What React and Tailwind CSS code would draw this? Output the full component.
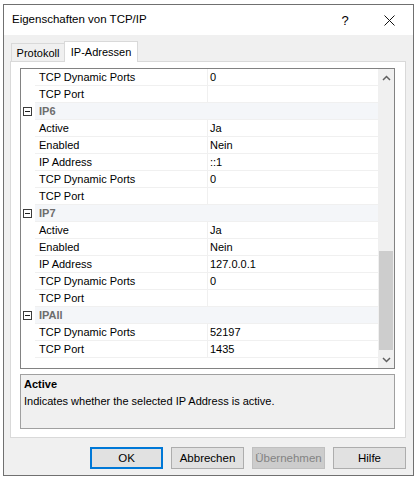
import React from 'react';

const ROWS = [
  { name: 'TCP Dynamic Ports', value: '0' },
  { name: 'TCP Port', value: '' },
  { cat: 'IP6' },
  { name: 'Active', value: 'Ja' },
  { name: 'Enabled', value: 'Nein' },
  { name: 'IP Address', value: '::1' },
  { name: 'TCP Dynamic Ports', value: '0' },
  { name: 'TCP Port', value: '' },
  { cat: 'IP7' },
  { name: 'Active', value: 'Ja' },
  { name: 'Enabled', value: 'Nein' },
  { name: 'IP Address', value: '127.0.0.1' },
  { name: 'TCP Dynamic Ports', value: '0' },
  { name: 'TCP Port', value: '' },
  { cat: 'IPAll' },
  { name: 'TCP Dynamic Ports', value: '52197' },
  { name: 'TCP Port', value: '1435' },
];

function MinusBox() {
  return (
    <div className="w-[9px] h-[9px] border border-[#3c3c3c] bg-white flex items-center justify-center">
      <div className="w-[5px] h-px bg-[#1e1e1e]" />
    </div>
  );
}

function Row({ row }) {
  if (row.cat) {
    return (
      <div className="flex h-[17px]">
        <div className="w-[14px] shrink-0 bg-white flex items-center justify-start pl-[2px]">
          <MinusBox />
        </div>
        <div className="flex-1 bg-[#f4f6f9] border-b border-[#f0f0f0] flex items-center pl-[4px] pt-px font-bold text-[#6d6d6d]">
          {row.cat}
        </div>
      </div>
    );
  }
  return (
    <div className="flex h-[17px]">
      <div className="w-[14px] shrink-0 bg-white" />
      <div className="w-[173px] shrink-0 border-b border-r border-[#f0f0f0] flex items-center pl-[4px] pt-px text-black">
        {row.name}
      </div>
      <div className="flex-1 border-b border-[#f0f0f0] flex items-center pl-[2px] pt-px text-black">
        {row.value}
      </div>
    </div>
  );
}

function Button({ children, primary, disabled }) {
  const cls = primary
    ? 'border-2 border-[#0078d7] bg-[#e1e1e1] text-black'
    : disabled
    ? 'border border-[#bfbfbf] bg-[#cccccc] text-[#838383]'
    : 'border border-[#adadad] bg-[#e1e1e1] text-black';
  return (
    <div className={`w-[73px] h-[22px] flex items-center justify-center pt-px text-[11.5px] ${cls}`}>
      {children}
    </div>
  );
}

export default function App() {
  return (
    <div
      className="w-[418px] h-[479px] bg-white pt-[4px] pl-[3px] text-[11px] leading-none"
      style={{ fontFamily: '"Liberation Sans", Arial, sans-serif' }}
    >
      <div className="w-[411px] h-[472px] border border-[#707070] flex flex-col bg-[#f0f0f0]">
        {/* title bar */}
        <div className="h-[30px] bg-white flex items-center shrink-0">
          <div className="pl-[8px] text-[11.5px] text-black flex-1">Eigenschaften von TCP/IP</div>
          <div className="w-[46px] flex justify-center pl-[2px] text-[13px] text-black">?</div>
          <div className="w-[46px] flex justify-center pr-[2px]">
            <svg width="11" height="11" viewBox="0 0 11 11">
              <path d="M0.5 0.5 L10.5 10.5 M10.5 0.5 L0.5 10.5" stroke="#111" strokeWidth="1" />
            </svg>
          </div>
        </div>

        {/* body */}
        <div className="flex-1 flex flex-col pl-[6px] pr-[7px] pt-[6px]">
          {/* tabs */}
          <div className="flex items-end h-[20px] pl-[1px]">
            <div className="h-[18px] w-[53px] border border-b-0 border-r-0 border-[#d9d9d9] bg-[#f0f0f0] flex items-center justify-center pt-px text-black">
              Protokoll
            </div>
            <div className="h-[21px] w-[74px] border border-b-0 border-[#d9d9d9] bg-white flex items-center justify-center text-black -mb-px relative z-10">
              IP-Adressen
            </div>
          </div>

          {/* panel */}
          <div className="h-[377px] border border-[#d9d9d9] bg-white pl-[9px] pr-[10px] pt-[6px]">
            {/* property grid */}
            <div className="h-[301px] border border-[#828282] bg-white flex">
              <div className="flex-1 flex flex-col">
                {ROWS.map((r, i) => (
                  <Row key={i} row={r} />
                ))}
              </div>
              <div className="w-[16px] bg-[#f0f0f0] flex flex-col items-center">
                <div className="h-[17px] w-full flex items-center justify-center">
                  <svg width="9" height="6" viewBox="0 0 9 6">
                    <path d="M1 5 L4.5 1.5 L8 5" stroke="#606060" strokeWidth="1.5" fill="none" />
                  </svg>
                </div>
                <div className="flex-1 w-full flex flex-col pb-[1px]">
                  <div className="flex-1" />
                  <div className="h-[99px] mx-px bg-[#cdcdcd]" />
                </div>
                <div className="h-[17px] w-full flex items-center justify-center">
                  <svg width="9" height="6" viewBox="0 0 9 6">
                    <path d="M1 1 L4.5 4.5 L8 1" stroke="#606060" strokeWidth="1.5" fill="none" />
                  </svg>
                </div>
              </div>
            </div>

            {/* description */}
            <div className="mt-[5px] h-[55px] border border-[#a0a0a0] bg-[#f0f0f0] pl-[3px] pt-[4px]">
              <div className="font-bold text-black">Active</div>
              <div className="mt-[6px] text-black">Indicates whether the selected IP Address is active.</div>
            </div>
          </div>

          {/* buttons */}
          <div className="flex justify-end gap-[8px] pt-[9px]">
            <Button primary>OK</Button>
            <Button>Abbrechen</Button>
            <Button disabled>Übernehmen</Button>
            <Button>Hilfe</Button>
          </div>
        </div>
      </div>
    </div>
  );
}
